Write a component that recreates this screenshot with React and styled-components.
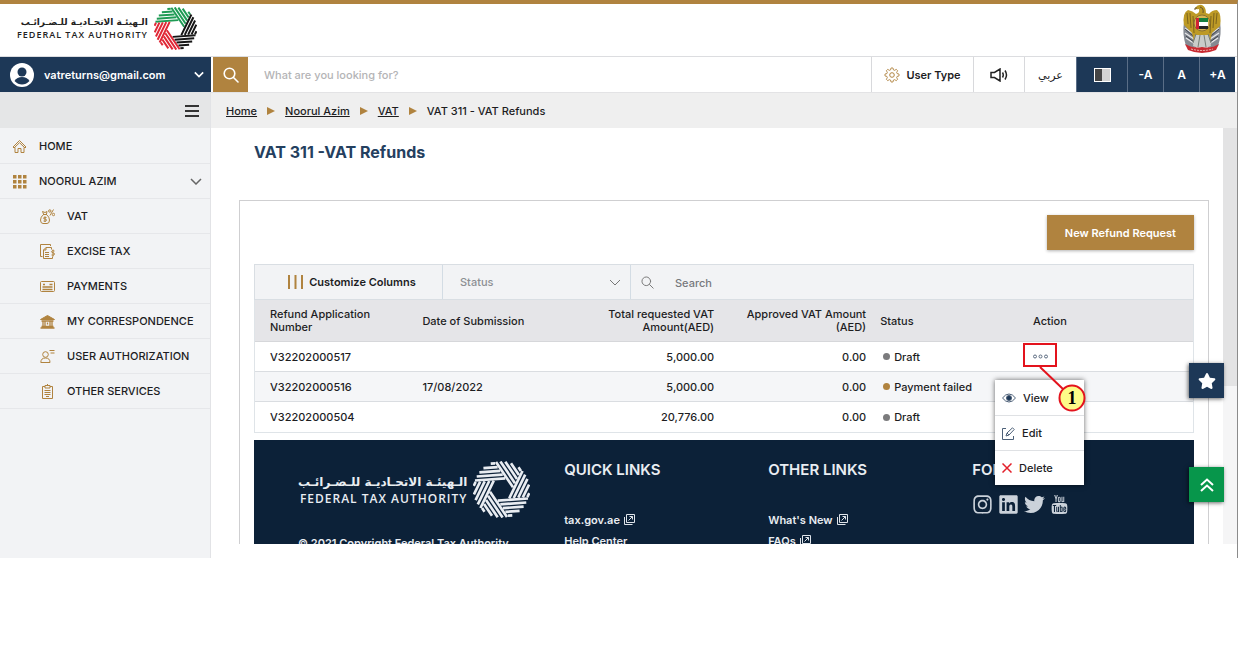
import React from 'react'
import styled, { createGlobalStyle, css } from 'styled-components';
import { FaInstagram, FaLinkedin, FaTwitter, FaStar } from 'react-icons/fa';
import { TfiYoutube } from 'react-icons/tfi';

const GOLD = '#b0833f';
const NAVY = '#1d3857';

const GlobalStyle = createGlobalStyle`
  * {
    box-sizing: border-box;
  }
  body {
    margin: 0;
    background-color: white;
    color: #1d1d1f;
    font-family: Inter, "DejaVu Sans", sans-serif;
    font-size: 11px;
    font-weight: 500;
  }
  button, input, select {
    font: inherit;
    color: inherit;
    border: 0;
    border-radius: 0;
    background: none;
    padding: 0;
    margin: 0;
    outline: 0;
  }
  a {
    color: inherit;
  }
  svg {
    display: block;
    flex: none;
  }
`;

const menuItems = [
    { label: 'HOME', icon: 'home' },
    { label: 'NOORUL AZIM', icon: 'grid', open: true },
    { label: 'VAT', icon: 'vat', sub: true },
    { label: 'EXCISE TAX', icon: 'excise', sub: true },
    { label: 'PAYMENTS', icon: 'card', sub: true },
    { label: 'MY CORRESPONDENCE', icon: 'bank', sub: true },
    { label: 'USER AUTHORIZATION', icon: 'user', sub: true },
    { label: 'OTHER SERVICES', icon: 'clipboard', sub: true },
]

const refunds = [
    { number: 'V32202000517', date: '', total: '5,000.00', approved: '0.00', status: 'Draft', open: true },
    { number: 'V32202000516', date: '17/08/2022', total: '5,000.00', approved: '0.00', status: 'Payment failed', failed: true },
    { number: 'V32202000504', date: '', total: '20,776.00', approved: '0.00', status: 'Draft' },
]

// six bands of parallel strokes, each turned 60 degrees from the last
function Rosette({ size, colors }) {
    const bands = []
    for (let k = 0; k < 6; k++) {
        let d = ''
        for (let n = 11; n < 28; n += 4) {
            const left = -Math.sqrt(28.5 * 28.5 - n * n)
            const right = (9.5 - n * 0.5) / 0.866
            d += `M${left.toFixed(2)} ${-n}L${right.toFixed(2)} ${-n}`
        }
        bands.push(<path key={k} d={d} transform={`rotate(${k * 60 - 4})`} stroke={colors[k]} strokeWidth="2.7" />)
    }
    return <svg width={size} height={size} viewBox="-29 -29 58 58" fill="none">{bands}</svg>
}

function Emblem() {
    return (
        <svg width="40" height="49" viewBox="0 0 40 49" fill="none">
            <path d="M2 18Q0 30 4 42L14 44 12 14ZM38 18Q40 30 36 42L26 44 28 14Z" fill="#858a92" />
            <path d="M3 24l9 6M3 29l9 6M4 34l9 6M37 24l-9 6M37 29l-9 6M36 34l-9 6" stroke="#e6e6e8" strokeWidth="1.4" />
            <path d="M3 25l8 7M4 32l8 6M37 25l-8 7M36 32l-8 6" stroke="#3f434b" strokeWidth="1" />
            <path d="M2 21Q0 9 6 6Q11 7 14 10Q18 9 17 5Q14 6 13 4Q16 0 20 1Q24 3 24 9L27 10Q30 6 35 6Q40 10 38 22L30 29 28 38H12L10 29Z" fill="#bd9a26" />
            <path d="M5 9l1 11M8 9l1 15M11 12l1 17M29 12l-1 17M32 9l-1 15M35 9l-1 11" stroke="#7c641b" strokeWidth="1" />
            <path d="M15 4q-3-1-2 2M18 3q4 1 3 6" stroke="#66532b" strokeWidth="1" />
            <circle cx="20" cy="19" r="8" fill="#d9b552" stroke="#887032" />
            <path d="M15 14h11v4H15z" fill="#16803f" />
            <path d="M15 18h11v4H15z" fill="white" />
            <path d="M15 22h11v3H15z" fill="#252525" />
            <path d="M14 14h3v11h-3z" fill="#cf2434" />
            <path d="M13 31h14l2 11-9 3-9-3Z" fill="#c9ccc9" />
            <path d="M14 30l-3 9M18 31l-2 12M22 31l2 12M26 30l3 9" stroke="#777e77" strokeWidth="1" />
            <path d="M3 40Q12 45 20 43Q29 45 37 40L34 46Q20 52 6 46Z" fill="#c92a31" />
            <path d="M9 45q11 3 22 0" stroke="#eab9b3" strokeWidth="1" strokeDasharray="2 1" />
        </svg>
    )
}

function gearPath() {
    let d = ''
    for (let i = 0; i < 96; i++) {
        const a = (i / 96) * Math.PI * 2
        const r = 6.2 + 0.9 * Math.tanh(3 * Math.cos(a * 8))
        d += `${i ? 'L' : 'M'}${(8 + r * Math.cos(a)).toFixed(2)} ${(8 + r * Math.sin(a)).toFixed(2)}`
    }
    return d + 'Z'
}

function Chevron({ width = 12, stroke = 'currentColor', weight = 1.5 }) {
    return (
        <svg width={width} height="7" viewBox="0 0 12 7" fill="none" stroke={stroke} strokeWidth={weight}>
            <path d="M1 1l5 5 5-5" />
        </svg>
    )
}

function Magnifier({ size, stroke, weight }) {
    return (
        <svg width={size} height={size} viewBox="0 0 16 16" fill="none" stroke={stroke} strokeWidth={weight} strokeLinecap="round">
            <circle cx="6.5" cy="6.5" r="5.3" />
            <path d="M10.5 10.5l4.5 4.5" />
        </svg>
    )
}

function ExternalIcon() {
    return (
        <svg width="11" height="11" viewBox="0 0 11 11" fill="none" stroke="#dfe4ea" strokeWidth="1">
            <path d="M2.5.5h8v8h-8zM.5 3v7.5h8M4.5 6.5l4-4M5.5 2.5h3v3" />
        </svg>
    )
}

const menuShapes = {
    home: <path d="M1 8L7.5 1.5 14 8l-1 1-5.500-5.300L2 9ZM3 8.500V13.500H6V9.500H9V13.500H12V8.500" />,
    grid: <path d="M1 1h3.5v3.5H1zM6 1h3.5v3.5H6zM11 1h3.5v3.5H11zM1 6h3.5v3.5H1zM6 6h3.5v3.5H6zM11 6h3.5v3.5H11zM1 11h3.5v3.5H1zM6 11h3.5v3.5H6zM11 11h3.5v3.5H11z" fill={GOLD} stroke="none" />,
    vat: (
        <>
            <path d="M3.5 5.500Q.5 8 .5 11Q.5 14.500 3 14.500H7Q9.500 14.500 9.500 11Q9.500 8 6.500 5.500ZM3 5.500h4M3.500 5L2.500 2.500l2.500 1 2-1L6.500 5" />
            <path d="M6.5 8.500Q3.500 7.500 3.500 9.200Q3.500 10 5 10Q6.500 10 6.500 11.200Q6.500 13 3.500 12M5 7.500v5.500M10 6.500L13.500.5" />
            <circle cx="9.8" cy="2" r="1.2" />
            <circle cx="13.5" cy="5.5" r="1.2" />
        </>
    ),
    excise: (
        <>
            <path d="M2.5 12.500H.5V.5H10.500V2M6 3.500H11.500V5.500M6 3.500L3.500 6V14.500H12.500V12.500M6 3.500V6H3.500M5 8.500h4M5 10.500h4M5 12.500h4" />
            <path d="M14.5 7Q11.500 6 11.500 7.800Q11.500 8.500 13 8.800Q14.500 9 14.500 10Q14.500 11.800 11.500 11M13 5.500v7" />
        </>
    ),
    card: (
        <>
            <rect x=".5" y="2.5" width="14" height="10" rx="1" />
            <path d="M3 5.500h2M9.500 5.500h3M2.500 8h10M2.500 10.500h10" strokeWidth="1.5" />
        </>
    ),
    bank: (
        <>
            <path d="M.5 5.500L7.500 1.500l7 4Z" fill={GOLD} />
            <path d="M1.5 7h12M3 7v5M5 7v5M7.500 8.500v2M10 7v5M12 7v5M1.500 12.500h12M.5 14h14" strokeWidth="1.3" />
        </>
    ),
    user: (
        <>
            <circle cx="5.5" cy="5.5" r="2.8" />
            <path d="M.8 13.500Q.8 9 5.500 9Q10 9 10 13.500ZM9.500 1.500h5M10.500 4h4" />
        </>
    ),
    clipboard: <path d="M5 2.500H2.500V14.500H12.500V2.500H10M5 1.500h5v2.500H5zM7.500 0v1.500M4.500 6.500h6M4.500 8.500h6M4.500 10.500h6M6 12.500h3" />,
}

function MenuIcon({ name }) {
    return (
        <svg width="15" height="15" viewBox="0 0 15 15" fill="none" stroke={GOLD} strokeWidth="1">
            {menuShapes[name]}
        </svg>
    )
}

function RowMenu() {
    return (
        <>
            <DropMenu>
                <DropItem>
                    <svg width="14" height="10" viewBox="0 0 14 10" fill="none" stroke="#4d6078">
                        <path d="M.5 5Q3.5 1 7 1T13.5 5Q10.5 9 7 9T.5 5Z" />
                        <circle cx="7" cy="5" r="2.5" fill={NAVY} />
                    </svg>
                    View
                </DropItem>
                <DropItem>
                    <svg width="13" height="13" viewBox="0 0 13 13" fill="none" stroke="#4d6078">
                        <path d="M4 1.5H.5v11h11V9M4 9l1-3L10.5.8l1.7 1.7L7 8ZM5 6l2 2" />
                    </svg>
                    Edit
                </DropItem>
                <DropItem>
                    <svg width="10" height="10" viewBox="0 0 10 10" fill="none" stroke="#e3202b" strokeWidth="1.5">
                        <path d="M.5.5l9 9M9.5.5l-9 9" />
                    </svg>
                    Delete
                </DropItem>
            </DropMenu>
            <Callout width="64" height="70" viewBox="0 0 64 70" fill="none" stroke="#e3131d" strokeWidth="2">
                <rect x="1" y="1" width="32" height="22" />
                <path d="M17 24L41 47" />
                <circle cx="49" cy="55" r="12.5" fill="#fdfb88" />
                <text x="49" y="61" textAnchor="middle" fill="black" stroke="none" fontFamily="Liberation Serif, serif" fontWeight="700" fontSize="18">1</text>
            </Callout>
        </>
    )
}

export default function App() {
    return (
        <Page>
            <GlobalStyle />
            <Screen>
                <Header>
                    <Logo>
                        <LogoText>
                            <LogoArabic lang="ar" dir="rtl">الـهيئـة الاتحـاديـة للـضـرائـب</LogoArabic>
                            <LogoLatin>FEDERAL TAX AUTHORITY</LogoLatin>
                        </LogoText>
                        <Rosette size={43} colors={['#1f9b55', '#1f9b55', '#151515', '#151515', '#e02836', '#e02836']} />
                    </Logo>
                    <Emblem />
                </Header>

                <Toolbar>
                    <Account>
                        <svg width="24" height="24" viewBox="0 0 24 24">
                            <circle cx="12" cy="12" r="12" fill="white" />
                            <circle cx="12" cy="9" r="4.5" fill={NAVY} />
                            <path d="M4.5 18Q7 14 12 14T19.5 18Q16 21.5 12 21.5T4.5 18Z" fill={NAVY} />
                        </svg>
                        <span>vatreturns@gmail.com</span>
                        <Chevron width={10} weight={2} />
                    </Account>
                    <SearchButton aria-label="Search site">
                        <Magnifier size={16} stroke="white" weight={1.6} />
                    </SearchButton>
                    <SiteSearch aria-label="Site search" placeholder="What are you looking for?" />
                    <Tool $width={102}>
                        <svg width="16" height="16" viewBox="0 0 16 16" fill="none" stroke={GOLD}>
                            <path d={gearPath()} />
                            <circle cx="8" cy="8" r="2.3" />
                        </svg>
                        User Type
                    </Tool>
                    <Tool $width={51} aria-label="Listen">
                        <svg width="18" height="14" viewBox="0 0 18 14" fill="none" stroke="#222" strokeWidth="1.5">
                            <path d="M1 4.5h3.5L10 1v12L4.5 9.5H1ZM12.5 4.5q1.5 2.5 0 5M15 2.5q3 4.5 0 9" />
                        </svg>
                    </Tool>
                    <Tool $width={52} lang="ar">عربي</Tool>
                    <Tool $dark $width={51} aria-label="Contrast">
                        <svg width="17" height="14" viewBox="0 0 17 14">
                            <path d="M0 0h17v14H0z" fill="white" />
                            <path d="M1 1h7v12H1z" fill="#444" />
                            <path d="M8 1h8v12H8z" fill="#d2d2d2" />
                        </svg>
                    </Tool>
                    <Tool $dark $width={36}>-A</Tool>
                    <Tool $dark $width={36}>A</Tool>
                    <Tool $dark $width={36}>+A</Tool>
                </Toolbar>

                <Body>
                    <Sidebar>
                        <SidebarTop>
                            <button aria-label="Toggle menu">
                                <svg width="14" height="12" viewBox="0 0 14 12" stroke="#333" strokeWidth="2">
                                    <path d="M0 1h14M0 6h14M0 11h14" />
                                </svg>
                            </button>
                        </SidebarTop>
                        {
                            menuItems.map((item) => (
                                <SidebarItem href="#" key={item.label} $sub={item.sub}>
                                    <MenuIcon name={item.icon} />
                                    <span>{item.label}</span>
                                    {item.open && <Chevron stroke="#666" />}
                                </SidebarItem>
                            ))
                        }
                    </Sidebar>

                    <Main>
                        <Breadcrumb aria-label="Breadcrumb">
                            <a href="#">Home</a>
                            <Arrow />
                            <a href="#">Noorul Azim</a>
                            <Arrow />
                            <a href="#">VAT</a>
                            <Arrow />
                            <span>VAT 311 - VAT Refunds</span>
                        </Breadcrumb>
                        <Viewport>
                            <Content>
                                <Title>VAT 311 -VAT Refunds</Title>
                                <Panel>
                                    <NewButton>New Refund Request</NewButton>
                                    <Filters>
                                        <Customize>
                                            <svg width="15" height="14" viewBox="0 0 15 14" stroke={GOLD} strokeWidth="2">
                                                <path d="M1 0v14M7.5 0v14M14 0v14" />
                                            </svg>
                                            Customize Columns
                                        </Customize>
                                        <StatusFilter>
                                            <select aria-label="Status">
                                                <option>Status</option>
                                            </select>
                                            <Chevron stroke="#777" weight={1} />
                                        </StatusFilter>
                                        <SearchFilter>
                                            <Magnifier size={13} stroke="#777" weight={1.2} />
                                            <input aria-label="Search refunds" placeholder="Search" />
                                        </SearchFilter>
                                    </Filters>
                                    <Table>
                                        <colgroup>
                                            <col style={{ width: '17.1%' }} />
                                            <col style={{ width: '16.3%' }} />
                                            <col style={{ width: '16.3%' }} />
                                            <col style={{ width: '16.2%' }} />
                                            <col style={{ width: '16.3%' }} />
                                            <col />
                                        </colgroup>
                                        <thead>
                                            <tr>
                                                <Th>Refund Application<br />Number</Th>
                                                <Th>Date of Submission</Th>
                                                <Th $right>Total requested VAT<br />Amount(AED)</Th>
                                                <Th $right>Approved VAT Amount<br />(AED)</Th>
                                                <Th>Status</Th>
                                                <Th>Action</Th>
                                            </tr>
                                        </thead>
                                        <tbody>
                                            {
                                                refunds.map((refund) => (
                                                    <Tr key={refund.number}>
                                                        <Td>{refund.number}</Td>
                                                        <Td>{refund.date}</Td>
                                                        <Td $right>{refund.total}</Td>
                                                        <Td $right>{refund.approved}</Td>
                                                        <Td><Status $failed={refund.failed}>{refund.status}</Status></Td>
                                                        <Td>
                                                            {
                                                                refund.open &&
                                                                (
                                                                    <ActionBox>
                                                                        <button aria-label="Row actions">
                                                                            <svg width="15" height="5" viewBox="0 0 15 5" fill="none" stroke="#5b6b80">
                                                                                <circle cx="2" cy="2.5" r="1.5" />
                                                                                <circle cx="7.5" cy="2.5" r="1.5" />
                                                                                <circle cx="13" cy="2.5" r="1.5" />
                                                                            </svg>
                                                                        </button>
                                                                        <RowMenu />
                                                                    </ActionBox>
                                                                )
                                                            }
                                                        </Td>
                                                    </Tr>
                                                ))
                                            }
                                        </tbody>
                                    </Table>
                                    <Footer>
                                        <div>
                                            <Logo $light>
                                                <LogoText>
                                                    <LogoArabic $light lang="ar" dir="rtl">الـهيئـة الاتحـاديـة للـضـرائـب</LogoArabic>
                                                    <LogoLatin $light>FEDERAL TAX AUTHORITY</LogoLatin>
                                                </LogoText>
                                                <Rosette size={57} colors={Array(6).fill('#e9edf2')} />
                                            </Logo>
                                            <Copyright>© 2021 Copyright Federal Tax Authority</Copyright>
                                        </div>
                                        <div>
                                            <FooterTitle>QUICK LINKS</FooterTitle>
                                            <FooterLink href="#">tax.gov.ae <ExternalIcon /></FooterLink>
                                            <FooterLink href="#">Help Center</FooterLink>
                                        </div>
                                        <div>
                                            <FooterTitle>OTHER LINKS</FooterTitle>
                                            <FooterLink href="#">What's New <ExternalIcon /></FooterLink>
                                            <FooterLink href="#">FAQs <ExternalIcon /></FooterLink>
                                        </div>
                                        <div>
                                            <FooterTitle $tight>FOLLOW US</FooterTitle>
                                            <Social>
                                                <a href="#" aria-label="Instagram"><FaInstagram size={21} /></a>
                                                <a href="#" aria-label="LinkedIn"><FaLinkedin size={21} /></a>
                                                <a href="#" aria-label="Twitter"><FaTwitter size={21} /></a>
                                                <a href="#" aria-label="YouTube"><TfiYoutube size={19} /></a>
                                            </Social>
                                        </div>
                                    </Footer>
                                </Panel>
                            </Content>
                            <ScrollTrack><ScrollThumb /></ScrollTrack>
                        </Viewport>
                        <SideButtons>
                            <SideButton aria-label="Favourites"><FaStar size={18} /></SideButton>
                            <SideButton $green aria-label="Back to top">
                                <svg width="14" height="14" viewBox="0 0 14 14" fill="none" stroke="white" strokeWidth="2">
                                    <path d="M1 7l6-5.5L13 7M1 13l6-5.5 6 5.5" />
                                </svg>
                            </SideButton>
                        </SideButtons>
                    </Main>
                </Body>
            </Screen>
        </Page>
    )
}

const Page = styled.div`
  height: 100vh;
  padding-bottom: 90px;
`;

const Screen = styled.div`
  display: flex;
  flex-direction: column;
  height: 100%;
  border-top: 4px solid ${GOLD};
  border-right: 1px solid #8b8b8b;
`;

const Header = styled.header`
  display: flex;
  justify-content: space-between;
  align-items: center;
  height: 52px;
  padding: 0 15px 4px 17px;
`;

const Logo = styled.div`
  display: flex;
  align-items: center;
  gap: 6px;
`;

const LogoText = styled.div`
  display: flex;
  flex-direction: column;
  align-items: flex-end;
`;

const LogoArabic = styled.span`
  font-family: "DejaVu Sans", sans-serif;
  font-weight: 700;
  font-size: ${props => props.$light ? 12 : 9}px;
  line-height: ${props => props.$light ? 17 : 13}px;
  white-space: nowrap;
  color: ${props => props.$light ? '#e9edf2' : '#222'};
`;

const LogoLatin = styled.span`
  font-family: "Open Sans", sans-serif;
  font-weight: 600;
  letter-spacing: 1px;
  font-size: ${props => props.$light ? 12 : 9}px;
  line-height: ${props => props.$light ? 15 : 12}px;
  white-space: nowrap;
  color: ${props => props.$light ? '#e9edf2' : '#222'};
`;

const Toolbar = styled.div`
  display: flex;
  height: 37px;
  border-top: 1px solid #dcdde0;
  border-bottom: 1px solid #e3e3e5;
  padding-right: 2px;
`;

const Account = styled.button`
  display: flex;
  align-items: center;
  gap: 10px;
  width: 211px;
  margin-right: 2px;
  padding: 0 7px 0 10px;
  background-color: ${NAVY};
  color: white;
  font-weight: 600;
  span {
    flex: 1;
    text-align: left;
  }
`;

const SearchButton = styled.button`
  display: flex;
  align-items: center;
  justify-content: center;
  width: 35px;
  background-color: ${GOLD};
`;

const SiteSearch = styled.input`
  flex: 1;
  min-width: 0;
  padding: 0 16px;
  &::placeholder {
    color: #b4b4b6;
  }
`;

const Tool = styled.button`
  display: flex;
  align-items: center;
  justify-content: center;
  gap: 6px;
  width: ${props => props.$width}px;
  border-left: 1px solid #d8d9dc;
  font-weight: 600;
  &:lang(ar) {
    font-weight: 500;
  }
  ${props => props.$dark && css`
    background-color: ${NAVY};
    border-color: #5a6e87;
    color: white;
    font-size: 12px;
  `}
`;

const Body = styled.div`
  display: flex;
  flex: 1;
  min-height: 0;
`;

const Sidebar = styled.nav`
  flex: none;
  width: 211px;
  background-color: #f2f3f5;
  border-right: 1px solid #e2e3e6;
`;

const SidebarTop = styled.div`
  display: flex;
  justify-content: flex-end;
  align-items: center;
  height: 35px;
  margin-bottom: 1px;
  padding-right: 11px;
  background-color: #e5e6e7;
`;

const SidebarItem = styled.a`
  display: flex;
  align-items: center;
  gap: 12px;
  height: 35px;
  padding: 0 8px 0 ${props => props.$sub ? 40 : 12}px;
  border-bottom: 1px solid #e6e7ea;
  text-decoration: none;
  span {
    flex: 1;
    white-space: nowrap;
  }
`;

const Main = styled.main`
  position: relative;
  display: flex;
  flex-direction: column;
  flex: 1;
  min-width: 0;
  padding-bottom: 14px;
`;

const Breadcrumb = styled.nav`
  display: flex;
  align-items: center;
  gap: 10px;
  flex: none;
  height: 35px;
  padding-left: 15px;
  background-color: #efefef;
`;

const Arrow = styled.i`
  border-left: 8px solid ${GOLD};
  border-top: 4px solid transparent;
  border-bottom: 4px solid transparent;
`;

const Viewport = styled.div`
  display: flex;
  flex: 1;
  min-height: 0;
  overflow: hidden;
`;

const Content = styled.div`
  flex: 1;
  min-width: 0;
  padding: 14px 14px 0 28px;
`;

const Title = styled.h1`
  margin: 0 0 38px 15px;
  font-size: 16px;
  line-height: 20px;
  font-weight: 700;
  color: #24405f;
`;

const Panel = styled.section`
  display: flex;
  flex-direction: column;
  padding: 14px;
  border: 1px solid #cfcfd1;
`;

const NewButton = styled.button`
  align-self: flex-end;
  height: 35px;
  padding: 0 18px;
  margin-bottom: 14px;
  background-color: ${GOLD};
  color: white;
  font-weight: 600;
  box-shadow: 0 1px 3px rgba(0, 0, 0, 0.3);
`;

const Filters = styled.div`
  display: flex;
  height: 36px;
  border: 1px solid #d9dee3;
  background-color: #f2f3f5;
`;

const Customize = styled.button`
  display: flex;
  align-items: center;
  justify-content: center;
  gap: 6px;
  width: 187px;
  padding-left: 7px;
  font-weight: 600;
`;

const StatusFilter = styled.div`
  display: flex;
  align-items: center;
  width: 189px;
  padding: 0 9px 0 17px;
  border-left: 1px solid #d3dce4;
  border-right: 1px solid #d3dce4;
  color: #8d8f93;
  select {
    flex: 1;
    appearance: none;
  }
`;

const SearchFilter = styled.div`
  display: flex;
  align-items: center;
  flex: 1;
  gap: 21px;
  padding-left: 10px;
  input {
    flex: 1;
    padding-top: 2px;
  }
  input::placeholder {
    color: #77797d;
  }
`;

const Table = styled.table`
  width: 100%;
  table-layout: fixed;
  border-collapse: separate;
  border-spacing: 0;
  border: 1px solid #dfe4e8;
  border-top: 0;
  th:first-child, td:first-child {
    padding-left: 15px;
  }
`;

const Th = styled.th`
  height: 42px;
  padding: 1px 7px 0;
  background-color: #e5e5e8;
  border-bottom: 1px solid #d6d7da;
  font-weight: 500;
  line-height: 13px;
  text-align: ${props => props.$right ? 'right' : 'left'};
  white-space: nowrap;
`;

const Tr = styled.tr`
  &:nth-child(even) {
    background-color: #f5f6f8;
  }
  &:not(:last-child) td {
    border-bottom: 1px solid #dadde1;
  }
`;

const Td = styled.td`
  height: 30px;
  padding: 0 7px;
  text-align: ${props => props.$right ? 'right' : 'left'};
`;

const Status = styled.span`
  display: flex;
  align-items: center;
  gap: 4px;
  padding-left: 3px;
  &::before {
    content: '';
    width: 7px;
    height: 7px;
    border-radius: 50%;
    background-color: ${props => props.$failed ? GOLD : '#7b7b7d'};
  }
`;

const ActionBox = styled.div`
  position: relative;
  display: flex;
`;

const DropMenu = styled.div`
  position: absolute;
  z-index: 1;
  top: 26px;
  left: -38px;
  width: 89px;
  background-color: white;
  box-shadow: 0 0 5px rgba(0, 0, 0, 0.6);
`;

const DropItem = styled.button`
  display: flex;
  align-items: center;
  gap: 7px;
  width: 100%;
  height: 35px;
  padding-left: 7px;
  font-weight: 500;
  & + & {
    border-top: 1px solid #dfe1e4;
  }
`;

const Callout = styled.svg`
  position: absolute;
  z-index: 2;
  top: -11px;
  left: -10px;
  pointer-events: none;
`;

const Footer = styled.footer`
  display: grid;
  grid-template-columns: 33% 217fr 217fr 236fr;
  margin-top: 7px;
  padding-top: 21px;
  background-color: #0c2138;
  color: #e9edf2;
  font-weight: 600;
  > div:first-child {
    padding-left: 44px;
  }
`;

const Copyright = styled.p`
  margin: 18px 0 0;
`;

const FooterTitle = styled.h2`
  margin: 0 0 ${props => props.$tight ? 15 : 30}px;
  font-size: 15px;
  line-height: 18px;
  font-weight: 600;
`;

const FooterLink = styled.a`
  display: flex;
  align-items: center;
  gap: 4px;
  height: 21px;
  text-decoration: none;
`;

const Social = styled.div`
  display: flex;
  align-items: center;
  gap: 5px;
  color: #cbd2da;
`;

const ScrollTrack = styled.div`
  width: 14px;
  background-color: #f5f5f6;
`;

const ScrollThumb = styled.div`
  height: 62%;
  background-color: #e3e3e4;
`;

const SideButtons = styled.div`
  position: absolute;
  z-index: 3;
  right: 13px;
  bottom: 56px;
  display: flex;
  flex-direction: column;
  gap: 69px;
`;

const SideButton = styled.button`
  display: flex;
  align-items: center;
  justify-content: center;
  width: 35px;
  height: 35px;
  background-color: ${props => props.$green ? '#07964b' : NAVY};
  color: white;
  box-shadow: -1px 1px 4px rgba(0, 0, 0, 0.6);
`;
